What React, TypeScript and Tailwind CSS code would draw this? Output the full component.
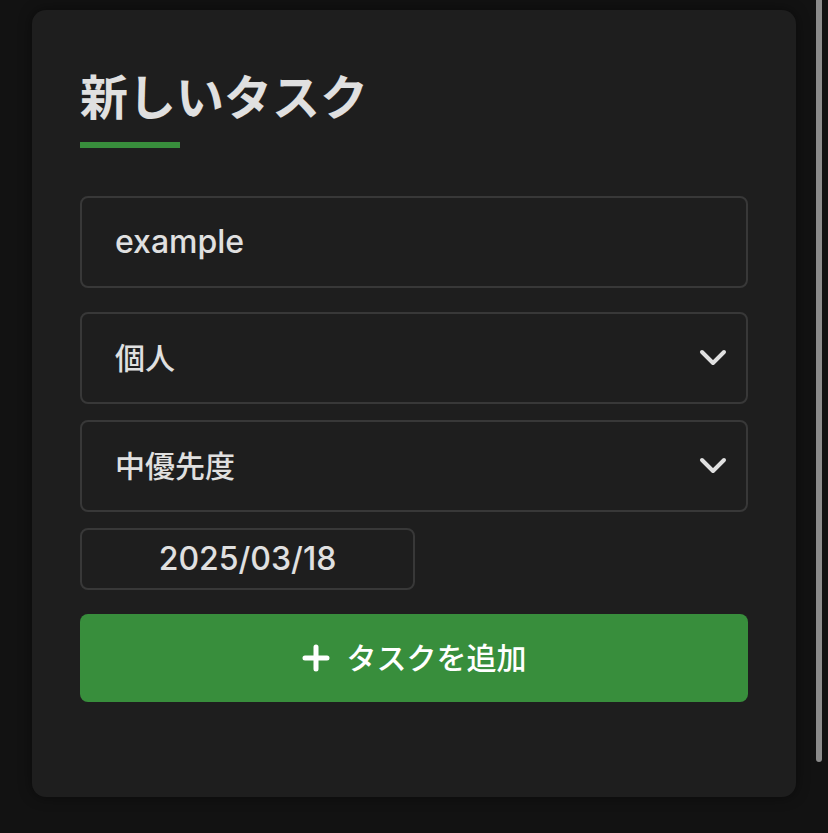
import React from "react";

const FONT = "font-['Inter','Noto_Sans_CJK_JP',sans-serif]";

const Chevron = () => (
  <svg width="28" height="18" viewBox="0 0 28 18" fill="none" className="shrink-0">
    <polyline
      points="3,3 14,14 25,3"
      stroke="#e0e0e0"
      strokeWidth="4"
      strokeLinecap="round"
      strokeLinejoin="round"
    />
  </svg>
);

const Plus = () => (
  <svg width="28" height="28" viewBox="0 0 28 28" className="shrink-0">
    <path d="M14 3v22M3 14h22" stroke="#ffffff" strokeWidth="5" strokeLinecap="round" />
  </svg>
);

const SelectBox = ({ label }: { label: string }) => (
  <div className="h-[92px] w-full rounded-lg border-2 border-[#383838] bg-[#1e1e1e] flex items-center justify-between pl-[33px] pr-[19px]">
    <span className="text-[30px] font-medium text-[#e0e0e0]">{label}</span>
    <Chevron />
  </div>
);

export default function App() {
  return (
    <div className={`relative min-h-screen bg-[#121212] ${FONT}`}>
      <div className="pl-8 pt-2.5 w-[796px]">
        <div className="h-[787px] rounded-[14px] bg-[#1e1e1e] px-12 pt-[52px] shadow-[0_0_14px_rgba(0,0,0,0.45)]">
          <h2 className="text-[48px] leading-[72px] font-bold text-[#e0e0e0]">新しいタスク</h2>
          <div className="mt-2 h-[6px] w-[100px] bg-[#388e3c]" />

          <div className="mt-12 flex flex-col">
            <div className="h-[92px] w-full rounded-lg border-2 border-[#383838] flex items-center pl-[33px]">
              <span className="text-[32px] font-medium text-[#e0e0e0]">example</span>
            </div>

            <div className="mt-6">
              <SelectBox label="個人" />
            </div>
            <div className="mt-4">
              <SelectBox label="中優先度" />
            </div>

            <div className="mt-4 h-[62px] w-[335px] rounded-lg border-2 border-[#383838] flex items-center justify-center">
              <span className="text-[32px] font-medium text-[#e0e0e0]">2025/03/18</span>
            </div>

            <button className="mt-6 h-[88px] w-full rounded-lg bg-[#388e3c] flex items-center justify-center gap-[17px]">
              <Plus />
              <span className="text-[30px] font-medium text-white">タスクを追加</span>
            </button>
          </div>
        </div>
      </div>
      <div className="absolute left-[816px] top-0 h-[762px] w-[6px] rounded-b-full bg-[#8b8b8b]" />
    </div>
  );
}
